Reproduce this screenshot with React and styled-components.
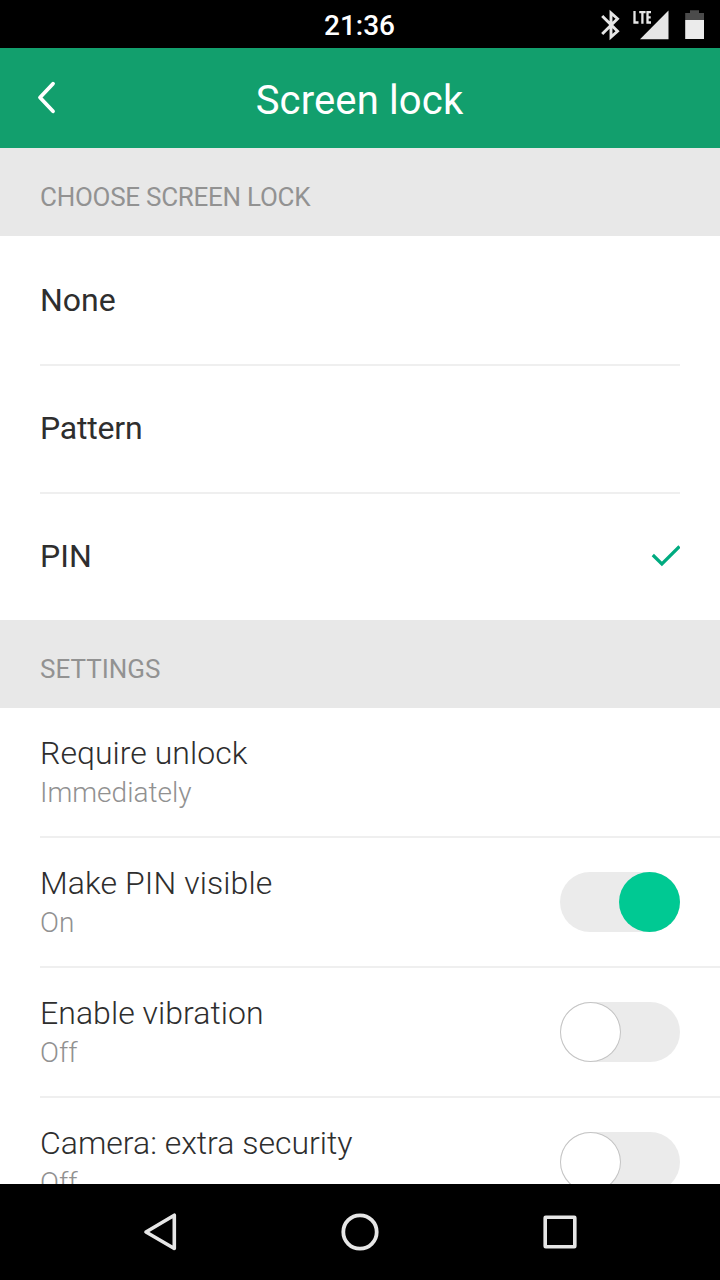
import styled, { createGlobalStyle } from 'styled-components';

const GlobalStyle = createGlobalStyle`
  body {
    margin: 0;
    background: #000;
    font-family: Roboto, sans-serif;
  }
`;

const Screen = styled.div`
  width: 720px;
  height: 1280px;
  display: flex;
  flex-direction: column;
  overflow: hidden;
  background: #fff;
`;

const StatusBar = styled.div`
  height: 48px;
  flex: none;
  display: grid;
  grid-template-columns: 1fr auto 1fr;
  align-items: center;
  background: #000;
  color: #fff;
`;

const Clock = styled.span`
  grid-column: 2;
  padding: 2px 1px 0 0;
  font-size: 28px;
  line-height: 48px;
  font-weight: 500;
`;

const StatusIcons = styled.svg`
  justify-self: end;
  display: block;
`;

const Header = styled.header`
  height: 100px;
  flex: none;
  display: grid;
  grid-template-columns: 96px 1fr 96px;
  align-items: center;
  background: #129f6d;
  color: #fff;
`;

const HeaderTitle = styled.h1`
  margin: 0;
  padding: 4px 1px 0 0;
  font-size: 40px;
  font-weight: 400;
  text-align: center;
  letter-spacing: 0.15px;
`;

const Content = styled.main`
  flex: 1;
  min-height: 0;
  overflow: hidden;
`;

const SectionTitle = styled.h2`
  box-sizing: border-box;
  height: 88px;
  margin: 0;
  padding: 10px 40px 0;
  background: #e8e8e8;
  color: #929292;
  font-size: 26px;
  line-height: 78px;
  font-weight: 400;
  letter-spacing: ${(props) => props.$spacing || 'normal'};
`;

const List = styled.ul`
  margin: 0;
  padding: 0 0 0 40px;
  list-style-type: none;
`;

const Option = styled.li`
  height: 128px;
  margin-right: 40px;
  display: flex;
  align-items: center;
  justify-content: space-between;
  color: #2e2e2e;
  font-size: 32px;
  line-height: 38px;
  letter-spacing: ${(props) => props.$spacing || 'normal'};

  & + & {
    box-sizing: border-box;
    border-top: 2px solid #efefef;
    padding-bottom: 2px;
  }
`;

const Setting = styled.li`
  box-sizing: border-box;
  height: 130px;
  padding-right: 40px;
  display: flex;
  align-items: center;
  justify-content: space-between;
  border-bottom: 2px solid #efefef;
`;

const SettingLabel = styled.div`
  color: #2e2e2e;
  font-size: 32px;
  line-height: 40px;
  font-weight: 300;
  letter-spacing: ${(props) => props.$spacing || '0.05px'};
`;

const SettingValue = styled.div`
  color: #919191;
  font-size: 28px;
  line-height: 40px;
  margin-bottom: -2px;
  font-weight: 300;
`;

const Toggle = styled.div`
  width: 120px;
  height: 60px;
  display: flex;
  justify-content: ${(props) => (props.$on ? 'flex-end' : 'flex-start')};
  border-radius: 30px;
  background: #ebebeb;
`;

const Knob = styled.div`
  box-sizing: border-box;
  width: 61px;
  height: 60px;
  border-radius: 50%;
  border: ${(props) => (props.$on ? 'none' : '1px solid #c4c4c4')};
  background: ${(props) => (props.$on ? '#00c993' : '#fff')};
`;

const NavBar = styled.nav`
  height: 96px;
  flex: none;
  display: flex;
  justify-content: center;
  align-items: center;
  gap: 152px;
  background: #000;
`;

const Icon = styled.svg`
  display: block;
  flex: none;
  fill: none;
`;

const options = [
  { name: 'None' },
  { name: 'Pattern', spacing: '-0.2px' },
  { name: 'PIN', selected: true },
];

const settings = [
  { label: 'Require unlock', value: 'Immediately' },
  { label: 'Make PIN visible', value: 'On', toggle: true, spacing: '0.1px' },
  { label: 'Enable vibration', value: 'Off', toggle: true },
  { label: 'Camera: extra security', value: 'Off', toggle: true, spacing: '0' },
];

export default function App() {
  return (
    <Screen>
      <GlobalStyle />
      <StatusBar>
        <Clock>21:36</Clock>
        <StatusIcons width="130" height="48" viewBox="590 0 130 48" fill="none">
          <path d="M602.200 15L617.500 30.300L611 36V12L617.500 17.700L602.200 33" stroke="#e6e6e6" strokeWidth="2.900" />
          <path d="M634.500 10V21.500H638.500M639.200 11.200H645.600M642.400 11.200V22.700M651 11.200H647.500V21.500H651M647.500 16.300H650.700" stroke="#e6e6e6" strokeWidth="2.300" />
          <path d="M668.500 9.500V38.300H640Z" fill="#e6e6e6" />
          <path d="M685.200 19V12H690V9.300H699V12H704V19Z" fill="#4b4b4b" />
          <path d="M685.200 19H704V38H685.200Z" fill="#ebebeb" />
        </StatusIcons>
      </StatusBar>
      <Header>
        <Icon width="96" height="100" viewBox="0 48 96 100" stroke="#fff" strokeWidth="3.800" strokeLinecap="round" strokeLinejoin="round">
          <path d="M53 83.700L40 97.500L53 111.300" />
        </Icon>
        <HeaderTitle>Screen lock</HeaderTitle>
      </Header>
      <Content>
        <SectionTitle $spacing="-0.270px">CHOOSE SCREEN LOCK</SectionTitle>
        <List>
          {options.map((option) => (
            <Option key={option.name} $spacing={option.spacing}>
              {option.name}
              {option.selected && (
                <Icon width="30" height="24" viewBox="650 544 30 24" stroke="#00ab80" strokeWidth="3.200">
                  <path d="M652.800 555L661.900 564L679.500 546.500" />
                </Icon>
              )}
            </Option>
          ))}
        </List>
        <SectionTitle>SETTINGS</SectionTitle>
        <List>
          {settings.map((setting) => (
            <Setting key={setting.label}>
              <div>
                <SettingLabel $spacing={setting.spacing}>{setting.label}</SettingLabel>
                <SettingValue>{setting.value}</SettingValue>
              </div>
              {setting.toggle && (
                <Toggle $on={setting.value === 'On'}>
                  <Knob $on={setting.value === 'On'} />
                </Toggle>
              )}
            </Setting>
          ))}
        </List>
      </Content>
      <NavBar>
        <Icon width="48" height="48" viewBox="136 1208 48 48" stroke="#e6e6e6" strokeWidth="3.600">
          <path d="M174.300 1215.200V1248.500L146 1232Z" strokeLinejoin="round" />
        </Icon>
        <Icon width="48" height="48" viewBox="336 1208 48 48" stroke="#e6e6e6" strokeWidth="3.800">
          <circle cx="360" cy="1232" r="16.700" />
        </Icon>
        <Icon width="48" height="48" viewBox="536 1208 48 48" stroke="#e6e6e6" strokeWidth="3.600">
          <rect x="545.200" y="1217.200" width="29.600" height="29.600" rx="0.500" strokeLinejoin="round" />
        </Icon>
      </NavBar>
    </Screen>
  );
}
